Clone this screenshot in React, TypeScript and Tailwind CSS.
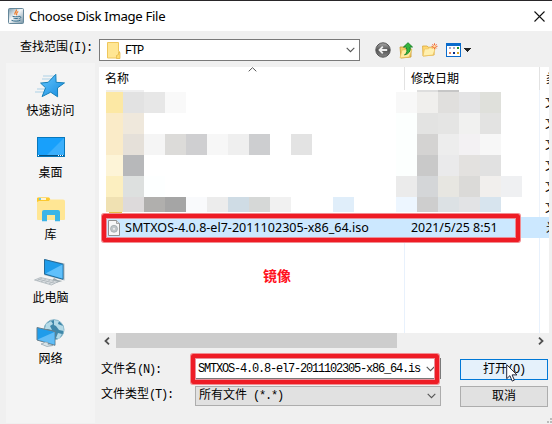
import React from 'react';

const ui = "font-['Noto_Sans','Noto_Sans_CJK_SC',sans-serif]";
const mono = "font-['Liberation_Mono','Noto_Sans_CJK_SC',monospace]";

function Fixed({ cjk = '', latin }: { cjk?: string; latin: string }) {
  return (
    <span className={`flex items-center whitespace-pre text-[12px] leading-[16px] text-black ${mono}`}>
      {cjk && <span>{cjk}</span>}
      <span className="tracking-[-1.2px]">{latin}</span>
    </span>
  );
}

function Chevron({ className = '' }: { className?: string }) {
  return (
    <svg className={className} width="9" height="6" viewBox="0 0 9 6" fill="none" stroke="#555" strokeWidth="1.1">
      <path d="M.7 .8 4.5 4.6 8.3 .8" />
    </svg>
  );
}

function JavaIcon() {
  return (
    <svg width="16" height="16" viewBox="0 0 16 16" fill="none">
      <defs>
        <linearGradient id="java" x1="0" y1="0" x2="1" y2="1">
          <stop stopColor="#7899aa" /><stop offset=".45" stopColor="#f5f8fa" /><stop offset="1" stopColor="#7190a2" />
        </linearGradient>
      </defs>
      <rect x=".5" y=".5" width="15" height="15" rx="1" fill="url(#java)" stroke="#66889b" />
      <path d="M8.3 1.6c1 2-2.6 2.8-1.2 5.2M10.3 3.6c-2.7 1.6-1.1 2.1-1.8 3.6" stroke="#ec7926" strokeWidth="1.2" />
      <path d="M4.5 8.3c1.8.7 4.7.6 6.4 0M5.5 10.2c1.5.5 3.4.5 4.8 0M3.5 12.3c2.5 1.2 7 1.1 9-.2M11 8.4c2.6-.5 2.2 2 .3 2.2" stroke="#39718f" />
    </svg>
  );
}

function FolderIcon() {
  return (
    <svg width="14" height="17" viewBox="0 0 14 17">
      <path d="M.5.5h11v9h1v6.5H.5z" fill="#ffe693" stroke="#efc75c" />
      <path d="M9.5 15.5v-2l2-1v-2h1.5v6h-3.5z" fill="#ffdc70" stroke="#dfb343" strokeWidth=".7" />
    </svg>
  );
}

function StarIcon() {
  return (
    <svg width="32" height="26" viewBox="0 0 32 26">
      <defs><linearGradient id="star" x1="0" y1="0" x2="1" y2="1"><stop stopColor="#65c8ff" /><stop offset="1" stopColor="#1589dd" /></linearGradient></defs>
      <path d="M9 3h12M8 6h11M3 16h9M1 19h10" stroke="#acd1e6" />
      <path d="m21.8 1.3.3 8 8.4.6-7 5 .1 8.9-6.9-4.6-8.6 4.4 3.5-8.8-5-4.7 7.6-.8z" fill="url(#star)" stroke="#1680ba" />
    </svg>
  );
}

function DesktopIcon() {
  return (
    <svg width="28" height="20" viewBox="0 0 28 20">
      <rect x=".5" y=".5" width="27" height="19" fill="#18a0fb" stroke="#0878bc" />
      <path d="M27 1v17H10z" fill="#3baffc" />
      <path d="M1 18.5h26" stroke="#07507d" />
      <path d="M1 18.5h2M21 18.5h5" stroke="white" strokeDasharray="1 1" />
    </svg>
  );
}

function LibraryIcon() {
  return (
    <svg width="28" height="25" viewBox="0 0 28 25">
      <path d="M0 1.5 1.5.5h10.7l1.3 2H26q2 0 2 2V22q0 1-1 1H1q-1 0-1-1z" fill="#ffe694" />
      <path d="M0 5V1.5q0-1 1-1h10.5q1.5 0 1.5 2L11.8 4H2z" fill="#fbc82e" />
      <path d="M2 2h7" stroke="white" strokeWidth="1.6" /><path d="M2 2h2" stroke="#3bb7ed" strokeWidth="1.6" />
      <path d="M5 24.3V15q0-2 2-2h14q2 0 2 2v9.3h-5V18h-8v6.3z" fill="#3bb5e7" />
    </svg>
  );
}

function PcIcon() {
  return (
    <svg width="32" height="28" viewBox="0 0 32 28">
      <path d="m10 1 20.5 4.5v17L10 17z" fill="#a8b6bd" />
      <path d="m10.5 1.5 18.5 4.7v15L10.5 16z" fill="#1f9cea" stroke="#246b99" />
      <path d="m28.5 6.5-17 9 17 5z" fill="#60c0fb" />
      <path d="m20 20-1.5 2-4-.3 8 3 6-1.7-5-1z" fill="#9da8ad" />
      <path d="m6.5 19.5 18 4-7 3.5L.5 22z" fill="#d9dee1" stroke="#a5afb4" strokeWidth=".7" />
      <path d="m4 21.2 17 4M8 20l-5 2.8M12 21l-5 2.9M16 22l-5 2.9M20 23l-5 2.9" stroke="#aeb6bb" strokeWidth=".8" />
    </svg>
  );
}

function NetworkIcon() {
  return (
    <svg width="29" height="29" viewBox="0 0 29 29">
      <circle cx="18" cy="10.7" r="10" fill="#3f87a9" stroke="#87b6c9" />
      <path d="m10 5 5-3 2 3-3 2 2 4-5-1-3 3zM18 1l5 1-1 3 5 2 1 5-5-1-3-4-2-1zM22 14l4 1-3 5-3-1z" fill="#b4dae7" />
      <path d="m1 8.5 18 4v13.8L1 21z" fill="#1f9cea" stroke="#697f8b" />
      <path d="m18.5 13-17 7.5 17 5z" fill="#62bdf6" />
      <path d="m9 23-2 1.5-2 .5 6 2.5 6-1-5-1v-2z" fill="#d8e3e8" stroke="#8da1ac" strokeWidth=".7" />
    </svg>
  );
}

function BackIcon() {
  return (
    <svg width="16" height="16" viewBox="0 0 16 16">
      <defs><linearGradient id="back" x1="0" y1="0" x2="0" y2="1"><stop stopColor="#aaa" /><stop offset=".5" stopColor="#545454" /><stop offset="1" stopColor="#888" /></linearGradient></defs>
      <circle cx="8" cy="8" r="7.2" fill="url(#back)" stroke="#555" />
      <path d="M12.2 8H5M7.8 4.7 4.5 8l3.3 3.3" stroke="#eee" strokeWidth="1.8" fill="none" />
    </svg>
  );
}

function UpIcon() {
  return (
    <svg width="14" height="17" viewBox="0 0 14 17">
      <path d="M1 5h4l1 1.5h6V15L2 16z" fill="#f4cd67" stroke="#c4952d" strokeWidth=".8" />
      <path d="m3 8 8-1 2 .7L10 15l-9 1z" fill="#ffeaa0" stroke="#e2b84c" strokeWidth=".6" />
      <path d="M5.5 13q4-3 1.5-8H4.5L9 .7 13.5 5H11q1.5 6-5.5 8z" fill="#34b43c" stroke="#168126" strokeWidth=".9" />
    </svg>
  );
}

function NewFolderIcon() {
  return (
    <svg width="16" height="14" viewBox="0 0 16 14">
      <path d="M.6 3h4.5l1 1.2h6V12L1 13z" fill="#ffd872" stroke="#dba839" strokeWidth=".8" />
      <path d="m2.5 6 4-.2 1-1h6L11 12 1 13z" fill="#fff0b0" stroke="#edc25b" strokeWidth=".7" />
      <path d="M12.5.3v6M9.5 3.3h6M10.4 1.2l4.2 4.2M14.6 1.2l-4.2 4.2" stroke="#f16436" />
      <circle cx="12.5" cy="3.3" r="1.2" fill="#ffe0a1" />
    </svg>
  );
}

function ViewIcon() {
  return (
    <svg width="25" height="14" viewBox="0 0 25 14" shapeRendering="crispEdges">
      <path d="M0 0h15v14H0z" fill="#0a6bcc" /><path d="M1 3h13v10H1z" fill="#fff" />
      <path d="M3 4h2v2H3zM7 4h2v2H7z" fill="#a9a8c8" /><path d="M11 4h2v2h-2z" fill="#24932c" />
      <path d="M3 9h2v2H3z" fill="#dc8062" /><path d="M7 9h2v2H7z" fill="#062b87" /><path d="M11 9h2v2h-2z" fill="#d5a62a" />
      <path d="M18 5h7l-3.5 4z" fill="#222" />
    </svg>
  );
}

function DiscFileIcon() {
  return (
    <svg className="shrink-0" width="12" height="16" viewBox="0 0 12 16">
      <path d="M.5.5h8l3 3v12H.5z" fill="#f7f7f7" stroke="#919191" />
      <path d="M8.5.5v3h3" fill="#ddd" stroke="#929292" strokeWidth=".8" />
      <circle cx="6" cy="8.8" r="3.5" fill="#bfc5c8" stroke="#9ca3a6" strokeWidth=".7" /><circle cx="6" cy="8.8" r="1.1" fill="#eee" />
    </svg>
  );
}

const W = 'bg-white';
const mosaic = [
  { h: 'h-[2px]', cells: ['bg-[#efede7]', 'bg-[#efeff0]', W, W, W, W, W, W, W, W, W, W, W, W, W, 'bg-[#dedede]', 'bg-[#c6c6c6]', W, W, W] },
  { h: 'h-[21px]', cells: ['bg-[#fce8a4]', 'bg-[#e2e2e2]', 'bg-[#e7e7e7]', 'bg-[#f9f9f9]', W, W, W, W, W, W, W, W, W, W, 'bg-[#f8f8f8]', 'bg-[#f0efed]', 'bg-[#e0dfdd]', 'bg-[#e4e4e5]', 'bg-[#dfe0db]', W] },
  { h: 'h-[21px]', cells: ['bg-[#faebc8]', 'bg-[#efe8dc]', W, W, W, W, W, W, W, W, W, W, W, W, 'bg-[#fcfffe]', 'bg-[#e3e3e2]', 'bg-[#e5e5e4]', 'bg-[#f1f1f0]', 'bg-[#e3e3e2]', W] },
  { h: 'h-[21px]', cells: ['bg-[#faebc8]', 'bg-[#e5e0d9]', 'bg-[#f5f5f5]', 'bg-[#dcdbd9]', 'bg-[#cfcfd1]', 'bg-[#f7f7f7]', 'bg-[#efefef]', 'bg-[#cdced0]', W, 'bg-[#e3e3e3]', W, W, W, W, 'bg-[#fcfffe]', 'bg-[#d4d3d2]', 'bg-[#ededed]', 'bg-[#f3f1f3]', 'bg-[#f7f7f7]', W] },
  { h: 'h-[21px]', cells: ['bg-[#fdf4d7]', 'bg-[#b7b8ba]', W, W, W, W, W, W, W, W, W, W, W, W, 'bg-[#fcfffe]', 'bg-[#c9c9c9]', 'bg-[#eaeaeb]', 'bg-[#e3e1df]', 'bg-[#e1e1e1]', W] },
  { h: 'h-[21px]', cells: ['bg-[#fcefc0]', 'bg-[#dde0df]', 'bg-[#fdffff]', W, W, W, W, W, W, W, W, W, W, W, 'bg-[#ebebeb]', 'bg-[#d4d6d8]', 'bg-[#e7e6e1]', 'bg-[#dbdad8]', 'bg-[#f1efed]', 'bg-[#eff0f2]'] },
  { h: 'h-[15px]', cells: ['bg-[#f0e1b2]', 'bg-[#dddadb]', 'bg-[#b0afad]', 'bg-[#a5a5a5]', 'bg-[#f9fafc]', 'bg-[#ececec]', 'bg-[#cfdce5]', 'bg-[#d6d8d7]', 'bg-[#f1f1f1]', W, W, 'bg-[#e0eefa]', W, W, 'bg-[#edf6ff]', 'bg-[#cecece]', 'bg-[#dce1e4]', 'bg-[#e2e3e5]', 'bg-[#d7e4ee]', W] },
];

const places = [
  { name: '快速访问', icon: <StarIcon />, h: 'h-[29px]', gap: 'mb-[17px]', shift: '' },
  { name: '桌面', icon: <DesktopIcon />, h: 'h-[27px]', gap: 'mb-[15px]', shift: '' },
  { name: '库', icon: <LibraryIcon />, h: 'h-[29px]', gap: 'mb-[14px]', shift: '' },
  { name: '此电脑', icon: <PcIcon />, h: 'h-[31px]', gap: 'mb-[12px]', shift: '' },
  { name: '网络', icon: <NetworkIcon />, h: 'h-[31px]', gap: '', shift: '' },
];

function Callout({ className }: { className: string }) {
  return <div className={`pointer-events-none absolute rounded-[2px] border-[4px] border-[#ee1c25] shadow-[0_0_0_1px_#f28d92,inset_0_0_0_1px_#e98f9a] ${className}`} />;
}

export default function App() {
  return (
    <div className={`flex h-[424px] w-[552px] flex-col overflow-hidden bg-[#f0f0f0] text-[12px] text-black ${ui}`}>
      <div className="h-px shrink-0 bg-[#292629]" />
      <header className="flex h-[30px] shrink-0 items-center bg-white pl-2 pr-[7px]">
        <JavaIcon />
        <span className="ml-[5px] grow whitespace-nowrap text-[13.2px] leading-[20px] tracking-[-0.34px]">Choose Disk Image File</span>
        <svg width="11" height="11" viewBox="0 0 11 11" stroke="#111" strokeWidth="1.1"><path d="m.5.5 10 10M10.5.5l-10 10" /></svg>
      </header>

      <div className="flex h-[32px] shrink-0 items-start pl-5 pt-2">
        <div className="w-[79px] pt-[1px]"><Fixed cjk="查找范围" latin="(I):" /></div>
        <div className="flex h-[22px] w-[261px] items-center border border-[#7a7a7a] bg-white pl-[7px] pr-[4px]">
          <FolderIcon />
          <div className="ml-[4px] grow pt-[2px]"><Fixed latin="FTP" /></div>
          <Chevron />
        </div>
        <div className="ml-[15px] flex h-[22px] items-center">
          <BackIcon />
          <div className="ml-[8px]"><UpIcon /></div>
          <div className="ml-[9px]"><NewFolderIcon /></div>
          <div className="ml-[8px]"><ViewIcon /></div>
        </div>
      </div>

      <div className="flex grow pl-[6px]">
        <nav className="flex h-[360px] w-[89px] shrink-0 flex-col items-center bg-[#f4f4f4] pt-[10px]">
          {places.map((p) => (
            <div key={p.name} className={`flex flex-col items-center ${p.gap}`}>
              <div className={`${p.h} ${p.shift}`}>{p.icon}</div>
              <span className="h-[18px] leading-[18px]">{p.name}</span>
            </div>
          ))}
        </nav>

        <main className="ml-[4px] mt-1 flex grow flex-col">
          <div className="relative h-[266px] w-[450px] overflow-hidden bg-white">
            <div className="flex h-[23px] items-center leading-[18px]">
              <div className="relative h-[23px] w-[306px] shrink-0 border-r border-[#e2e2e2] pl-[6px] pt-[3px]">
                名称
                <svg className="absolute left-[149px] top-0" width="9" height="5" viewBox="0 0 9 5" fill="none" stroke="#555"><path d="m.7 4.3 3.8-3.6 3.8 3.6" /></svg>
              </div>
              <div className="h-[23px] w-[135px] shrink-0 border-r border-[#e2e2e2] pl-[6px] pt-[3px]">修改日期</div>
              <div className="h-[23px] w-[9px] overflow-hidden whitespace-nowrap pl-[6px] pt-[3px]">类</div>
            </div>
            <div className="flex h-[127px]">
              <div className="ml-[7px] w-[416px] shrink-0">
                {mosaic.map((row, i) => (
                  <div key={i} className="flex">
                    {row.cells.map((c, j) => <div key={j} className={`${row.h} ${c} ${j === 0 ? 'w-[17px]' : 'w-[21px]'}`} />)}
                  </div>
                ))}
                <div className="ml-[3px] h-[2px] w-[13px] bg-[#e9bd43]" />
              </div>
              <div className="ml-[17px] h-[127px] w-[10px] overflow-hidden border-l border-[#edf3fb] pl-[5px] pt-[2px] leading-[21px]">
                {[0, 1, 2, 3, 4, 5].map((n) => <div key={n} className="h-[21px] w-[20px]">文</div>)}
              </div>
            </div>
            <div className="ml-[4px] flex h-[21px] items-center bg-[#cce8ff] pl-[5px] leading-[21px]">
              <DiscFileIcon />
              <span className="ml-[5px] w-[286px] shrink-0 whitespace-nowrap text-[12.55px]">SMTXOS-4.0.8-el7-2011102305-x86_64.iso</span>
              <span className="w-[135px] shrink-0 whitespace-nowrap text-[12.4px]">2021/5/25 8:51</span>
              <span className="w-[3px] overflow-hidden whitespace-nowrap">光</span>
            </div>
            <div className="flex h-[95px]">
              <div className="w-[306px] shrink-0 border-r border-[#e8f1fc] pl-[164px] pt-[28px] text-[14px] font-bold leading-[20px] text-[#ff1020]">镜像</div>
              <div className="w-[135px] border-r border-[#e8f1fc]" />
            </div>
            <Callout className="left-[3px] top-[147px] h-[28px] w-[418px]" />
          </div>

          <div className="flex h-[15px] w-[450px] items-center">
            <svg className="ml-[5px]" width="6" height="8" viewBox="0 0 6 8" fill="none" stroke="#505050" strokeWidth="1.8"><path d="M5 .7 1.5 4 5 7.3" /></svg>
            <div className="ml-[6px] h-[15px] w-[281px] bg-[#cdcdcd]" />
            <div className="grow" />
            <svg className="mr-[5px]" width="6" height="8" viewBox="0 0 6 8" fill="none" stroke="#505050" strokeWidth="1.8"><path d="m1 .7 3.5 3.3L1 7.3" /></svg>
          </div>

          <div className="mt-[10px] flex">
            <div className="w-[96px] pl-[2px]">
              <div className="pt-[4px]"><Fixed cjk="文件名" latin="(N):" /></div>
              <div className="pt-[9px]"><Fixed cjk="文件类型" latin="(T):" /></div>
            </div>
            <div className="relative w-[246px]">
              <div className="flex h-[21px] items-center border border-[#7a7a7a] bg-white pl-[2px] pr-[5px]">
                <div className="grow"><Fixed latin="SMTXOS-4.0.8-el7-2011102305-x86_64.is" /></div>
                <Chevron />
              </div>
              <div className="mt-[7px] flex h-[20px] items-center border border-[#adadad] bg-[#e1e1e1] pl-[3px] pr-[4px]">
                <div className="grow"><Fixed cjk="所有文件" latin=" (*.*)" /></div>
                <Chevron />
              </div>
              <Callout className="-left-[4px] -top-[4px] h-[30px] w-[248px]" />
            </div>
            <div className="relative ml-[19px] w-[88px] pt-px">
              <button className="flex h-[21px] w-full items-center justify-center border border-[#0078d7] bg-[#e5f1fb]"><Fixed cjk="打开" latin="(O)" /></button>
              <button className="mt-[6px] flex h-[21px] w-full items-center justify-center border border-[#adadad] bg-[#e1e1e1]"><Fixed cjk="取消" latin="" /></button>
              <svg className="absolute left-[46px] top-[6px]" width="12" height="18" viewBox="0 0 12 18"><path d="M.7.7v14l3.2-3 2.3 5.4 2.2-1-2.3-5.2H11z" fill="#fff" stroke="#20263a" /></svg>
            </div>
          </div>
          <div className="grow" />
          <div className="flex items-end justify-end gap-px pb-px">
            <i className="size-[2px] bg-[#bbb]" />
            <i className="flex flex-col gap-px"><b className="size-[2px] bg-[#bbb]" /><b className="size-[2px] bg-[#bbb]" /></i>
          </div>
        </main>
      </div>
    </div>
  );
}
